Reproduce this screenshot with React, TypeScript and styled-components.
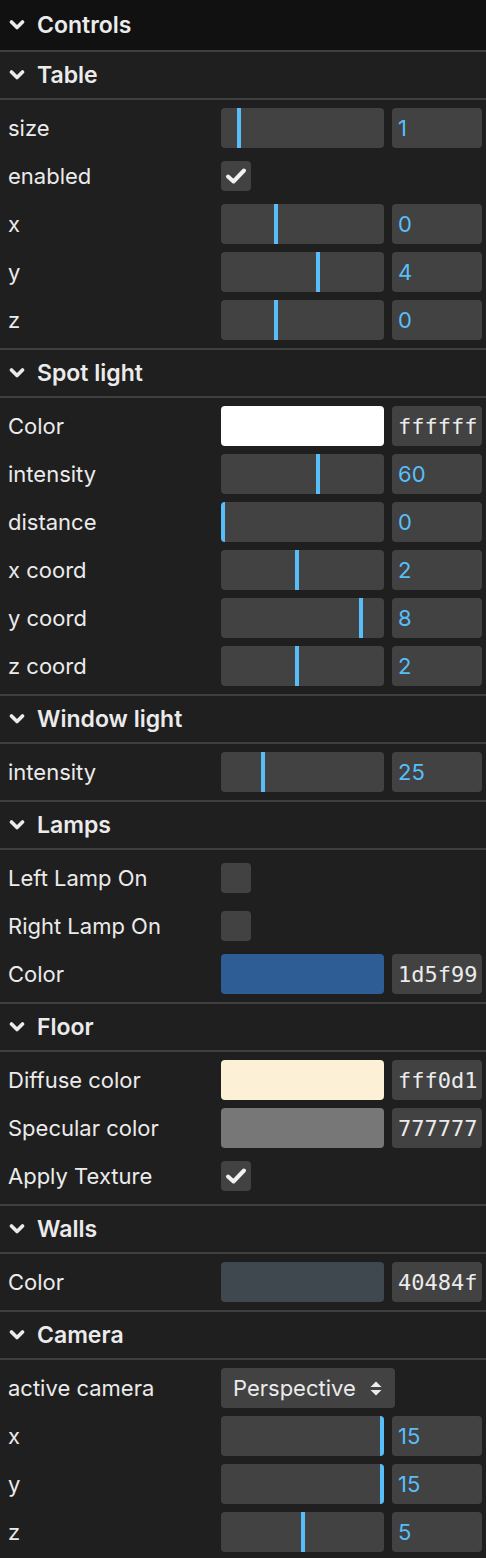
import React from "react";
import styled, { createGlobalStyle } from "styled-components";

const GlobalStyle = createGlobalStyle`
  html, body {
    margin: 0;
    padding: 0;
    background: #1f1f1f;
  }
  * {
    box-sizing: border-box;
  }
`;

const Panel = styled.div`
  width: 486px;
  background: #1f1f1f;
  color: #ebebeb;
  font-family: Inter, "Liberation Sans", sans-serif;
  font-size: 22px;
`;

const TitleBar = styled.div<{ $root?: boolean }>`
  height: 50px;
  display: flex;
  align-items: center;
  gap: 12px;
  padding-left: 9px;
  background: ${(p) => (p.$root ? "#111111" : "#1f1f1f")};
  border-top: ${(p) => (p.$root ? "none" : "2px solid #3f3f3f")};
  border-bottom: ${(p) => (p.$root ? "none" : "2px solid #3f3f3f")};
  font-weight: 600;
  font-size: 23px;
  color: #ebebeb;
`;

const Children = styled.div`
  display: flex;
  flex-direction: column;
  gap: 8px;
  padding: 8px 0;
`;

const Row = styled.div`
  height: 40px;
  display: flex;
  align-items: center;
  padding: 0 4px 0 8px;
`;

const Label = styled.div`
  width: 213px;
  flex-shrink: 0;
  white-space: nowrap;
`;

const SliderTrack = styled.div`
  width: 163px;
  height: 40px;
  background: #424242;
  border-radius: 4px;
  overflow: hidden;
`;

const SliderFill = styled.div`
  height: 100%;
  box-sizing: content-box;
  border-right: 4px solid #58befa;
`;

const ValueBox = styled.div<{ $mono?: boolean }>`
  width: 90px;
  height: 40px;
  margin-left: 8px;
  background: #424242;
  border-radius: 4px;
  display: flex;
  align-items: center;
  padding-left: ${(p) => (p.$mono ? "6px" : "6px")};
  font-family: ${(p) =>
    p.$mono ? '"DejaVu Sans Mono", "Liberation Mono", monospace' : "inherit"};
  font-size: ${(p) => (p.$mono ? "22px" : "22px")};
  color: ${(p) => (p.$mono ? "#ebebeb" : "#58befa")};
  white-space: nowrap;
  overflow: hidden;
`;

const Swatch = styled.div<{ $color: string }>`
  width: 163px;
  height: 40px;
  border-radius: 4px;
  background: ${(p) => p.$color};
`;

const CheckBox = styled.div`
  width: 30px;
  height: 30px;
  border-radius: 4px;
  background: #424242;
  display: flex;
  align-items: center;
  justify-content: center;
`;

const SelectBox = styled.div`
  width: 174px;
  height: 40px;
  border-radius: 4px;
  background: #424242;
  display: flex;
  align-items: center;
  justify-content: space-between;
  padding: 0 13px 0 12px;
`;

const Chevron = () => (
  <svg width="16" height="10" viewBox="0 0 16 10">
    <path d="M2.5 2 L8 7.5 L13.5 2" fill="none" stroke="#ebebeb" strokeWidth="3.6" strokeLinecap="round" strokeLinejoin="round" />
  </svg>
);

const Check = () => (
  <svg width="22" height="18" viewBox="0 0 22 18">
    <path d="M3 9.5 L8.5 14.5 L19 3.5" fill="none" stroke="#f2f2f2" strokeWidth="4" strokeLinecap="round" strokeLinejoin="round" />
  </svg>
);

const UpDown = () => (
  <svg width="12" height="15" viewBox="0 0 12 15">
    <path d="M6 0.5 L11.5 6 H0.5 Z" fill="#ebebeb" />
    <path d="M6 14.5 L11.5 9 H0.5 Z" fill="#ebebeb" />
  </svg>
);

type Ctrl =
  | { kind: "number"; name: string; value: number; min: number; max: number }
  | { kind: "bool"; name: string; value: boolean }
  | { kind: "color"; name: string; value: string; swatch?: string }
  | { kind: "select"; name: string; value: string };

interface IFolder {
  title: string;
  controls: Ctrl[];
}

const folders: IFolder[] = [
  {
    title: "Table",
    controls: [
      { kind: "number", name: "size", value: 1, min: 0, max: 10 },
      { kind: "bool", name: "enabled", value: true },
      { kind: "number", name: "x", value: 0, min: -5, max: 10 },
      { kind: "number", name: "y", value: 4, min: -5, max: 10 },
      { kind: "number", name: "z", value: 0, min: -5, max: 10 },
    ],
  },
  {
    title: "Spot light",
    controls: [
      { kind: "color", name: "Color", value: "ffffff" },
      { kind: "number", name: "intensity", value: 60, min: 0, max: 100 },
      { kind: "number", name: "distance", value: 0, min: 0, max: 100 },
      { kind: "number", name: "x coord", value: 2, min: -5, max: 10 },
      { kind: "number", name: "y coord", value: 8, min: -5, max: 10 },
      { kind: "number", name: "z coord", value: 2, min: -5, max: 10 },
    ],
  },
  {
    title: "Window light",
    controls: [{ kind: "number", name: "intensity", value: 25, min: 0, max: 100 }],
  },
  {
    title: "Lamps",
    controls: [
      { kind: "bool", name: "Left Lamp On", value: false },
      { kind: "bool", name: "Right Lamp On", value: false },
      { kind: "color", name: "Color", value: "1d5f99", swatch: "#2e5d96" },
    ],
  },
  {
    title: "Floor",
    controls: [
      { kind: "color", name: "Diffuse color", value: "fff0d1", swatch: "#fcf0d6" },
      { kind: "color", name: "Specular color", value: "777777" },
      { kind: "bool", name: "Apply Texture", value: true },
    ],
  },
  {
    title: "Walls",
    controls: [{ kind: "color", name: "Color", value: "40484f" }],
  },
  {
    title: "Camera",
    controls: [
      { kind: "select", name: "active camera", value: "Perspective" },
      { kind: "number", name: "x", value: 15, min: -5, max: 15 },
      { kind: "number", name: "y", value: 15, min: -5, max: 15 },
      { kind: "number", name: "z", value: 5, min: -5, max: 15 },
    ],
  },
];

function Control({ c }: { c: Ctrl }) {
  return (
    <Row>
      <Label>{c.name}</Label>
      {c.kind === "number" && (
        <>
          <SliderTrack>
            <SliderFill style={{ width: ((c.value - c.min) / (c.max - c.min)) * 159 }} />
          </SliderTrack>
          <ValueBox>{c.value}</ValueBox>
        </>
      )}
      {c.kind === "bool" && <CheckBox>{c.value && <Check />}</CheckBox>}
      {c.kind === "color" && (
        <>
          <Swatch $color={c.swatch ?? `#${c.value}`} />
          <ValueBox $mono>{c.value}</ValueBox>
        </>
      )}
      {c.kind === "select" && (
        <SelectBox>
          {c.value}
          <UpDown />
        </SelectBox>
      )}
    </Row>
  );
}

function App() {
  return (
    <>
      <GlobalStyle />
      <Panel>
        <TitleBar $root>
          <Chevron />
          Controls
        </TitleBar>
        {folders.map((f) => (
          <div key={f.title}>
            <TitleBar>
              <Chevron />
              {f.title}
            </TitleBar>
            <Children>
              {f.controls.map((c, i) => (
                <Control key={i} c={c} />
              ))}
            </Children>
          </div>
        ))}
      </Panel>
    </>
  );
}

export default App;
